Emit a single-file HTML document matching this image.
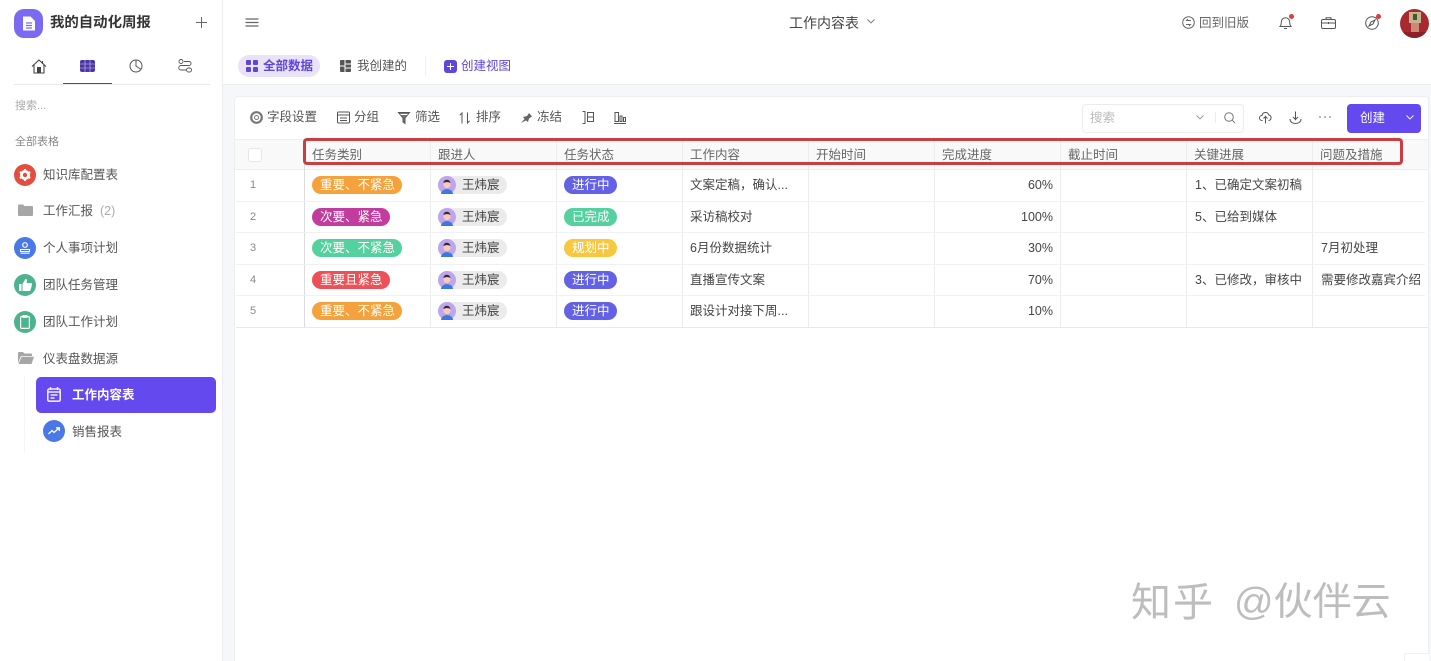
<!DOCTYPE html>
<html lang="zh"><head><meta charset="utf-8"><title>工作内容表</title>
<style>
*{box-sizing:border-box}
html,body{margin:0;padding:0}
html{width:1431px;height:661px;overflow:hidden}
body{width:1431px;height:661px;position:relative;overflow:hidden;background:#fff;font-family:"Liberation Sans","Noto Sans CJK SC",sans-serif;color:#444}
.a{position:absolute;white-space:nowrap}
svg{position:absolute;display:block;overflow:visible}
.ico{width:22px;height:22px;border-radius:50%}
.nav{color:#555;font-size:12.5px}
.h{color:#666;font-size:12.5px;top:145px;line-height:20px;position:absolute;white-space:nowrap}
.v{position:absolute;top:139px;height:189px;width:1px;background:#ececee}
.l{position:absolute;left:236px;width:1189px;height:1px;background:#f1f1f3}
.p{position:absolute;height:18px;border-radius:9px;color:#fff;font-size:12.5px;line-height:18px;padding:0 8px;white-space:nowrap;text-align:center}
.u{position:absolute;left:438px;width:69px;height:18px;border-radius:9px;background:#ebebeb;color:#444;font-size:12.5px;line-height:18px;padding-left:24px;white-space:nowrap}
.n{position:absolute;left:250px;font-size:11px;color:#888;line-height:18px}
.c{position:absolute;font-size:12.5px;color:#444;line-height:18px;white-space:nowrap}
.tb{position:absolute;top:107px;font-size:12.5px;color:#555;line-height:20px;white-space:nowrap}
</style></head><body>

<!-- sidebar -->
<div class="a" style="left:0;top:0;width:223px;height:661px;background:#fff;border-right:1px solid #eeeef0"></div>
<div class="a" style="left:14px;top:9px;width:29px;height:29px;border-radius:10px;background:#7a6af2"></div>
<svg style="left:22px;top:15px" width="14" height="17" viewBox="0 0 14 17"><path d="M1 1.500h7.500L13 6v9.500H1z" fill="#fff"/><path d="M4 8h6M4 10.500h6M4 13h6" stroke="#7a6af2" stroke-width="1.200"/></svg>
<div class="a" style="left:50px;top:12px;font-size:14.4px;font-weight:700;color:#333;line-height:22px">我的自动化周报</div>
<svg style="left:195px;top:16px" width="13" height="13" viewBox="0 0 13 13"><path d="M6.500 1v11M1 6.500h11" stroke="#666" stroke-width="1"/></svg>

<svg style="left:31px;top:59px" width="16" height="15" viewBox="0 0 16 15"><path d="M1 7.500 8 1l7 6.500M3 6v8h10V6M11.500 2v3" fill="none" stroke="#444" stroke-width="1.100"/><rect x="6" y="8" width="4" height="6" fill="#444"/></svg>
<svg style="left:80px;top:60px" width="15" height="12" viewBox="0 0 15 12"><rect width="15" height="12" rx="2" fill="#4a36a8"/><path d="M5 0v12M10 0v12M0 4h15M0 8h15" stroke="#cfc8ee" stroke-width=".6"/></svg>
<svg style="left:129px;top:59px" width="14" height="14" viewBox="0 0 14 14"><circle cx="7" cy="7" r="6" fill="none" stroke="#555" stroke-width="1"/><path d="M7 1v6l4.500 3" fill="none" stroke="#555" stroke-width="1"/></svg>
<svg style="left:178px;top:59px" width="14" height="14" viewBox="0 0 14 14"><circle cx="3" cy="2.500" r="2" fill="none" stroke="#555" stroke-width=".9"/><rect x="8.500" y="9" width="5" height="4" rx="2" fill="none" stroke="#555" stroke-width=".9"/><path d="M6 2.500h5a2 2 0 0 1 0 4H3a2 2 0 0 0 0 4.500h5" fill="none" stroke="#555" stroke-width=".9"/></svg>
<div class="a" style="left:14px;top:84px;width:196px;height:1px;background:#eaeaec"></div>
<div class="a" style="left:63px;top:83px;width:49px;height:1px;background:#4f44a8"></div>

<div class="a" style="left:15px;top:97px;font-size:11px;color:#aaa;line-height:18px">搜索...</div>
<div class="a" style="left:15px;top:133px;font-size:11px;color:#888;line-height:18px">全部表格</div>

<div class="a ico" style="left:14px;top:164px;background:#e34d3f"></div>
<svg style="left:19px;top:169px" width="12" height="12" viewBox="0 0 12 12"><circle cx="6" cy="6" r="3.600" fill="none" stroke="#fff" stroke-width="2.800"/><path d="M6 0v2M6 10v2M.8 3l1.700 1M9.500 8l1.700 1M.8 9l1.700-1M9.500 4l1.700-1" stroke="#fff" stroke-width="1.900"/></svg>
<div class="a nav" style="left:43px;top:165px;line-height:20px">知识库配置表</div>
<svg style="left:18px;top:204px" width="15" height="12" viewBox="0 0 15 12"><path d="M0 1.500A1 1 0 0 1 1 .5h4l1.500 1.500H14a1 1 0 0 1 1 1V11a1 1 0 0 1-1 1H1a1 1 0 0 1-1-1z" fill="#a6a6a6"/></svg>
<div class="a nav" style="left:43px;top:201px;line-height:20px">工作汇报<span style="color:#aaa;margin-left:7px">(2)</span></div>
<div class="a ico" style="left:14px;top:237px;background:#4a78e6"></div>
<svg style="left:19px;top:242px" width="12" height="12" viewBox="0 0 12 12"><circle cx="6" cy="3" r="2.300" fill="none" stroke="#fff" stroke-width="1.200"/><path d="M1.500 7.500h9v2h-9zM1.500 11.200h9" fill="none" stroke="#fff" stroke-width="1.100"/></svg>
<div class="a nav" style="left:43px;top:238px;line-height:20px">个人事项计划</div>
<div class="a ico" style="left:14px;top:274px;background:#4cb38d"></div>
<svg style="left:19px;top:279px" width="13" height="12" viewBox="0 0 13 12"><path d="M0 5h2.500v7H0zM3.500 5 6.500 0c1.200 0 1.700 1 1.500 2L7.500 4H12c1 0 1.200 1 1 1.700l-1.500 5.300c-.2.600-.6 1-1.200 1H3.500z" fill="#fff"/></svg>
<div class="a nav" style="left:43px;top:275px;line-height:20px">团队任务管理</div>
<div class="a ico" style="left:14px;top:311px;background:#4cb38d"></div>
<svg style="left:20px;top:315px" width="10" height="14" viewBox="0 0 10 14"><rect x=".6" y="1.600" width="8.800" height="11.800" rx="1" fill="none" stroke="#fff" stroke-width="1.200"/><rect x="2.500" y="0" width="5" height="2.800" fill="#fff"/></svg>
<div class="a nav" style="left:43px;top:312px;line-height:20px">团队工作计划</div>
<svg style="left:18px;top:352px" width="16" height="12" viewBox="0 0 16 12"><path d="M0 1a1 1 0 0 1 1-1h4l1.500 1.500H13a1 1 0 0 1 1 1V4H3L0 11z" fill="#a6a6a6"/><path d="M3.500 4.700H16l-2.500 7.300H.5z" fill="#a6a6a6"/></svg>
<div class="a nav" style="left:43px;top:349px;line-height:20px">仪表盘数据源</div>
<div class="a" style="left:24px;top:376px;width:1px;height:76px;background:#f4f4f6"></div>
<div class="a" style="left:36px;top:377px;width:180px;height:36px;border-radius:5px;background:#6449ee"></div>
<svg style="left:47px;top:387px" width="14" height="15" viewBox="0 0 14 15"><rect x=".8" y="2" width="12.400" height="12.200" rx="1.500" fill="none" stroke="#f0e8ff" stroke-width="1.600"/><path d="M3.500 0v3M10.500 0v3M.8 5h12.400M3.500 8h7M3.500 11h4" stroke="#f0e8ff" stroke-width="1.500"/></svg>
<div class="a" style="left:72px;top:385px;font-size:12.500px;font-weight:700;color:#fff;line-height:20px">工作内容表</div>
<div class="a ico" style="left:43px;top:420px;background:#4a78e6"></div>
<svg style="left:48px;top:427px" width="12" height="8" viewBox="0 0 12 8"><path d="M.5 7 4 3.500 6 5.500 11 1M8 .8h3.300V4" fill="none" stroke="#fff" stroke-width="1.300"/></svg>
<div class="a nav" style="left:72px;top:422px;line-height:20px">销售报表</div>

<!-- top bar -->
<svg style="left:245px;top:18px" width="14" height="10" viewBox="0 0 14 10"><path d="M.5 1h13M.5 4.500h13M.5 8h13" stroke="#666" stroke-width="1.200"/></svg>
<div class="a" style="left:789px;top:13px;font-size:14px;color:#444;line-height:20px">工作内容表</div>
<svg style="left:867px;top:19px" width="8" height="5" viewBox="0 0 8 5"><path d="M.5.500 4 4 7.500.500" fill="none" stroke="#777" stroke-width=".9"/></svg>
<svg style="left:1182px;top:16px" width="13" height="13" viewBox="0 0 13 13"><circle cx="6.500" cy="6.500" r="5.800" fill="none" stroke="#666"/><path d="M9 4.500H4.500L6 3M4 8.500h4.500L7 10" fill="none" stroke="#666" stroke-width=".9"/></svg>
<div class="a" style="left:1199px;top:13px;font-size:12.5px;color:#666;line-height:20px">回到旧版</div>
<svg style="left:1279px;top:16px" width="13" height="14" viewBox="0 0 13 14"><path d="M1 10.500c1-1 1.300-2 1.300-4.500a4.200 4.200 0 0 1 8.400 0c0 2.500.3 3.500 1.300 4.500zM5 12.500h3" fill="none" stroke="#555"/></svg>
<div class="a" style="left:1289px;top:14px;width:5px;height:5px;border-radius:50%;background:#e0393e"></div>
<svg style="left:1321px;top:17px" width="15" height="12" viewBox="0 0 15 12"><rect x=".5" y="2.500" width="14" height="9" rx="1.500" fill="none" stroke="#555"/><path d="M5 2.500V.700h5v1.800M.5 6h14M7.500 5v2" fill="none" stroke="#555"/></svg>
<svg style="left:1365px;top:16px" width="14" height="14" viewBox="0 0 14 14"><circle cx="7" cy="7" r="6.300" fill="none" stroke="#555"/><path d="M10 4 8 8 4 10 6 6z" fill="none" stroke="#555"/></svg>
<div class="a" style="left:1376px;top:14px;width:5px;height:5px;border-radius:50%;background:#e0393e"></div>
<div class="a" style="left:1400px;top:9px;width:29px;height:29px;border-radius:50%;background:#a82a30;overflow:hidden">
<div class="a" style="left:9px;top:3px;width:12px;height:11px;background:#c7b28b"></div>
<div class="a" style="left:13px;top:5px;width:4px;height:6px;background:#3e5a34"></div>
<div class="a" style="left:11px;top:14px;width:8px;height:9px;background:#c98a76"></div>
<div class="a" style="left:0;top:23px;width:29px;height:6px;background:#8b2026"></div>
</div>

<!-- view tabs -->
<div class="a" style="left:238px;top:55px;width:82px;height:22px;border-radius:11px;background:#e9e3fa"></div>
<svg style="left:246px;top:60px" width="12" height="12" viewBox="0 0 12 12"><g fill="#5e46d8"><rect width="5" height="5" rx="1"/><rect x="7" width="5" height="5" rx="1"/><rect y="7" width="5" height="5" rx="1"/><rect x="7" y="7" width="5" height="5" rx="1"/></g></svg>
<div class="a" style="left:263px;top:56px;font-size:12.500px;font-weight:700;color:#5e46d8;line-height:20px">全部数据</div>
<svg style="left:340px;top:60px" width="11" height="12" viewBox="0 0 11 12"><rect width="11" height="12" rx="1" fill="#555"/><path d="M5 0v12M5 4h6M5 8h6M0 6h5" stroke="#fff"/></svg>
<div class="a" style="left:357px;top:56px;font-size:12.500px;color:#555;line-height:20px">我创建的</div>
<div class="a" style="left:425px;top:56px;width:1px;height:20px;background:#f0f0f2"></div>
<div class="a" style="left:444px;top:60px;width:13px;height:13px;border-radius:3px;background:#5e46d8"></div>
<svg style="left:447px;top:63px" width="7" height="7" viewBox="0 0 7 7"><path d="M3.500 0v7M0 3.500h7" stroke="#fff"/></svg>
<div class="a" style="left:461px;top:56px;font-size:12.500px;color:#5e46d8;line-height:20px">创建视图</div>

<!-- content background -->
<div class="a" style="left:223px;top:84px;width:1208px;height:577px;background:#f6f7f9;border-top:1px solid #eaebee"></div>
<div class="a" style="left:234px;top:96px;width:1195px;height:570px;background:#fff;border:1px solid #eceef1;border-radius:4px"></div>

<!-- toolbar -->
<svg style="left:250px;top:111px" width="13" height="13" viewBox="0 0 13 13"><circle cx="6.500" cy="6.500" r="5.300" fill="none" stroke="#777" stroke-width="2.200"/><circle cx="6.500" cy="6.500" r="2" fill="none" stroke="#777"/></svg>
<div class="tb" style="left:267px">字段设置</div>
<svg style="left:337px;top:111px" width="13" height="13" viewBox="0 0 13 13"><rect x=".5" y="1" width="12" height="11" rx="1" fill="none" stroke="#555"/><path d="M.5 4h12M3 7h7M3 9.500h7" stroke="#555" stroke-width=".9"/></svg>
<div class="tb" style="left:354px">分组</div>
<svg style="left:398px;top:112px" width="12" height="12" viewBox="0 0 12 12"><path d="M.5.500h11L7 6v5.500L5 10V6z" fill="#777" stroke="#555"/><path d="M2.500 2.500h7" stroke="#fff"/></svg>
<div class="tb" style="left:415px">筛选</div>
<svg style="left:459px;top:112px" width="12" height="12" viewBox="0 0 12 12"><path d="M3 11.500V1L.8 3.200M8.500.5V11l2.200-2.200" fill="none" stroke="#555"/></svg>
<div class="tb" style="left:476px">排序</div>
<svg style="left:520px;top:112px" width="13" height="12" viewBox="0 0 13 12"><path d="M1 11 4.500 7 3 5l4-1 2-3 3 3.500-3 2-1 3.500-2-1.500z" fill="#666"/></svg>
<div class="tb" style="left:537px">冻结</div>
<svg style="left:582px;top:111px" width="12" height="13" viewBox="0 0 12 13"><path d="M.5.500h2.500v12H.5M5.500 1.500h6v4.500h-6zM5.500 6h6v4.500h-6z" fill="none" stroke="#555"/></svg>
<svg style="left:614px;top:112px" width="12" height="12" viewBox="0 0 12 12"><path d="M0 11.500h12M1 .5h3.500v9H1zM6 4h2v5.500H6zM9.500 5.500h2v4h-2z" fill="none" stroke="#555"/></svg>

<div class="a" style="left:1082px;top:104px;width:162px;height:29px;border:1px solid #ececee;border-radius:4px"></div>
<div class="a" style="left:1090px;top:108px;font-size:12.500px;color:#bbb;line-height:20px">搜索</div>
<svg style="left:1196px;top:115px" width="8" height="5" viewBox="0 0 8 5"><path d="M.5.500 4 4 7.500.500" fill="none" stroke="#999" stroke-width=".9"/></svg>
<div class="a" style="left:1215px;top:112px;width:1px;height:11px;background:#ececee"></div>
<svg style="left:1224px;top:112px" width="12" height="12" viewBox="0 0 12 12"><circle cx="5" cy="5" r="4.300" fill="none" stroke="#777"/><path d="M8.200 8.200 11 11" stroke="#777"/></svg>
<svg style="left:1259px;top:111px" width="13" height="13" viewBox="0 0 13 13"><path d="M3.500 9.500H3a2.500 2.500 0 0 1 0-5 3.500 3.500 0 0 1 6.800-.5 2.800 2.800 0 0 1 0 5.500h-.3M6.500 12.500v-7L4.500 7.500M6.500 5.500l2 2" fill="none" stroke="#555"/></svg>
<svg style="left:1289px;top:111px" width="13" height="13" viewBox="0 0 13 13"><path d="M6.500.5v8L4 6M6.500 8.500 9 6M1 8c0 3 2.500 4.500 5.500 4.500S12 11 12 8" fill="none" stroke="#555"/></svg>
<svg style="left:1319px;top:116px" width="12" height="2" viewBox="0 0 12 2"><circle cx="1" cy="1" r=".8" fill="#666"/><circle cx="6" cy="1" r=".8" fill="#666"/><circle cx="11" cy="1" r=".8" fill="#666"/></svg>
<div class="a" style="left:1347px;top:104px;width:74px;height:29px;border-radius:4px;background:#6449ee"></div>
<div class="a" style="left:1360px;top:108px;font-size:12.500px;color:#fff;line-height:20px">创建</div>
<svg style="left:1406px;top:115px" width="8" height="5" viewBox="0 0 8 5"><path d="M.5.500 4 4 7.500.500" fill="none" stroke="#fff" stroke-width=".9"/></svg>

<!-- table -->
<div class="a" style="left:235px;top:139px;width:1193px;height:31px;background:#f9f9fa;border-top:1px solid #eeeef0;border-bottom:1px solid #eeeef0"></div>
<div class="a" style="left:248px;top:148px;width:14px;height:14px;background:#fff;border:1px solid #e6e6e8;border-radius:3px"></div>
<div class="v" style="left:304px;background:#dcdcde"></div><div class="v" style="left:430px"></div><div class="v" style="left:556px"></div><div class="v" style="left:682px"></div><div class="v" style="left:808px"></div><div class="v" style="left:934px"></div><div class="v" style="left:1060px"></div><div class="v" style="left:1186px"></div><div class="v" style="left:1312px"></div>
<div class="l" style="top:201px"></div><div class="l" style="top:232px"></div><div class="l" style="top:264px"></div><div class="l" style="top:295px"></div><div class="l" style="top:327px;background:#e9e9eb;width:1192px"></div>

<div class="h" style="left:312px">任务类别</div><div class="h" style="left:438px">跟进人</div><div class="h" style="left:564px">任务状态</div><div class="h" style="left:690px">工作内容</div><div class="h" style="left:816px">开始时间</div><div class="h" style="left:942px">完成进度</div><div class="h" style="left:1068px">截止时间</div><div class="h" style="left:1194px">关键进展</div><div class="h" style="left:1320px">问题及措施</div>

<div class="a" style="left:303px;top:138px;width:1100px;height:27px;border:3px solid #ca3e42;border-radius:4px"></div>

<div class="n" style="top:176px">1</div><div class="n" style="top:208px">2</div><div class="n" style="top:239px">3</div><div class="n" style="top:271px">4</div><div class="n" style="top:302px">5</div>

<div class="p" style="left:312px;top:176px;width:90px;background:#f5a23c">重要、不紧急</div>
<div class="p" style="left:312px;top:208px;width:78px;background:#c23c9e">次要、紧急</div>
<div class="p" style="left:312px;top:239px;width:90px;background:#55d09f">次要、不紧急</div>
<div class="p" style="left:312px;top:271px;width:78px;background:#ee5057">重要且紧急</div>
<div class="p" style="left:312px;top:302px;width:90px;background:#f5a23c">重要、不紧急</div>

<div class="u" style="top:176px">王炜宸</div><div class="u" style="top:208px">王炜宸</div><div class="u" style="top:239px">王炜宸</div><div class="u" style="top:271px">王炜宸</div><div class="u" style="top:302px">王炜宸</div>

<svg style="left:438px;top:176px" width="18" height="18" viewBox="0 0 18 18"><circle cx="9" cy="9" r="9" fill="#bda6ee"/><path d="M3 18a6 5 0 0 1 12 0z" fill="#3f78dd"/><circle cx="9" cy="8.500" r="3.600" fill="#f6cdb4"/><path d="M5.500 7c0-4 6-4.500 7 0-2-1.200-5-1.200-7 0z" fill="#3a2340"/></svg>
<svg style="left:438px;top:208px" width="18" height="18" viewBox="0 0 18 18"><circle cx="9" cy="9" r="9" fill="#bda6ee"/><path d="M3 18a6 5 0 0 1 12 0z" fill="#3f78dd"/><circle cx="9" cy="8.500" r="3.600" fill="#f6cdb4"/><path d="M5.500 7c0-4 6-4.500 7 0-2-1.200-5-1.200-7 0z" fill="#3a2340"/></svg>
<svg style="left:438px;top:239px" width="18" height="18" viewBox="0 0 18 18"><circle cx="9" cy="9" r="9" fill="#bda6ee"/><path d="M3 18a6 5 0 0 1 12 0z" fill="#3f78dd"/><circle cx="9" cy="8.500" r="3.600" fill="#f6cdb4"/><path d="M5.500 7c0-4 6-4.500 7 0-2-1.200-5-1.200-7 0z" fill="#3a2340"/></svg>
<svg style="left:438px;top:271px" width="18" height="18" viewBox="0 0 18 18"><circle cx="9" cy="9" r="9" fill="#bda6ee"/><path d="M3 18a6 5 0 0 1 12 0z" fill="#3f78dd"/><circle cx="9" cy="8.500" r="3.600" fill="#f6cdb4"/><path d="M5.500 7c0-4 6-4.500 7 0-2-1.200-5-1.200-7 0z" fill="#3a2340"/></svg>
<svg style="left:438px;top:302px" width="18" height="18" viewBox="0 0 18 18"><circle cx="9" cy="9" r="9" fill="#bda6ee"/><path d="M3 18a6 5 0 0 1 12 0z" fill="#3f78dd"/><circle cx="9" cy="8.500" r="3.600" fill="#f6cdb4"/><path d="M5.500 7c0-4 6-4.500 7 0-2-1.200-5-1.200-7 0z" fill="#3a2340"/></svg>

<div class="p" style="left:564px;top:176px;width:53px;background:#6462e4">进行中</div>
<div class="p" style="left:564px;top:208px;width:53px;background:#55d09f">已完成</div>
<div class="p" style="left:564px;top:239px;width:53px;background:#f6c83f">规划中</div>
<div class="p" style="left:564px;top:271px;width:53px;background:#6462e4">进行中</div>
<div class="p" style="left:564px;top:302px;width:53px;background:#6462e4">进行中</div>

<div class="c" style="left:690px;top:176px">文案定稿，确认...</div>
<div class="c" style="left:690px;top:208px">采访稿校对</div>
<div class="c" style="left:690px;top:239px">6月份数据统计</div>
<div class="c" style="left:690px;top:271px">直播宣传文案</div>
<div class="c" style="left:690px;top:302px">跟设计对接下周...</div>

<div class="c" style="right:378px;top:176px">60%</div>
<div class="c" style="right:378px;top:208px">100%</div>
<div class="c" style="right:378px;top:239px">30%</div>
<div class="c" style="right:378px;top:271px">70%</div>
<div class="c" style="right:378px;top:302px">10%</div>

<div class="c" style="left:1195px;top:176px">1、已确定文案初稿</div>
<div class="c" style="left:1195px;top:208px">5、已给到媒体</div>
<div class="c" style="left:1195px;top:271px">3、已修改，审核中</div>
<div class="c" style="left:1321px;top:239px">7月初处理</div>
<div class="c" style="left:1321px;top:271px;width:104px;overflow:hidden">需要修改嘉宾介绍</div>

<!-- watermark -->
<div class="a" style="left:1131px;top:578px;font-size:40px;line-height:50px;color:#bdbdbd;letter-spacing:2px">知乎</div>
<div class="a" style="left:1234px;top:578px;font-size:39px;line-height:50px;color:#bdbdbd">@伙伴云</div>
<div class="a" style="left:1404px;top:653px;width:25px;height:8px;background:#fff;border-top:1px solid #f0f0f2;border-left:1px solid #f0f0f2"></div>
</body></html>
